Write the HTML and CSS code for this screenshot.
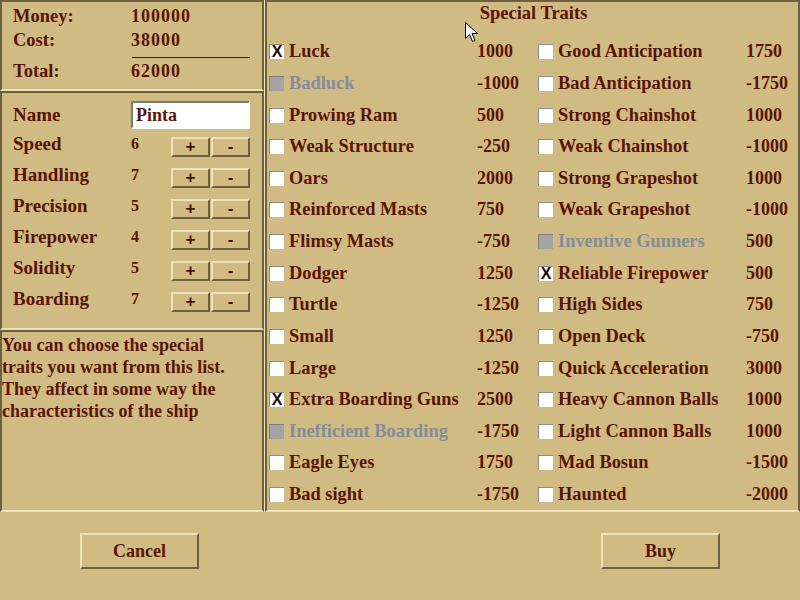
FILE: index.html
```html
<!DOCTYPE html>
<html lang="en">
<head>
    <meta charset="UTF-8">
    <title>Shipyard</title>
    <link rel="stylesheet" href="styles.css">
</head>
<body>
    <div class="screen">
        <div class="main">
            <div class="side">
                <div class="panel money">
                    <div class="money-row"><span>Money:</span><span class="num">100000</span></div>
                    <div class="money-row"><span>Cost:</span><span class="num">38000</span></div>
                    <div class="money-line"></div>
                    <div class="money-row"><span>Total:</span><span class="num">62000</span></div>
                </div>
                <div class="panel stats">
                    <div class="stat name-row"><span>Name</span><input class="name-input" type="text" value="Pinta"></div>
                    <div class="stat"><span>Speed</span><span class="val">6</span><div class="pm"><button>+</button><button>-</button></div></div>
                    <div class="stat"><span>Handling</span><span class="val">7</span><div class="pm"><button>+</button><button>-</button></div></div>
                    <div class="stat"><span>Precision</span><span class="val">5</span><div class="pm"><button>+</button><button>-</button></div></div>
                    <div class="stat"><span>Firepower</span><span class="val">4</span><div class="pm"><button>+</button><button>-</button></div></div>
                    <div class="stat"><span>Solidity</span><span class="val">5</span><div class="pm"><button>+</button><button>-</button></div></div>
                    <div class="stat"><span>Boarding</span><span class="val">7</span><div class="pm"><button>+</button><button>-</button></div></div>
                </div>
                <div class="panel help">
                    <p class="help-text">You can choose the special traits you want from this list. They affect in some way the characteristics of the ship</p>
                </div>
            </div>
            <div class="panel traits">
                <div class="traits-title">Special Traits</div>
                <div class="trait-grid">
                    <div class="trait"><span class="cb checked">X</span><span>Luck</span><span>1000</span></div>
                    <div class="trait"><span class="cb"></span><span>Good Anticipation</span><span>1750</span></div>
                    <div class="trait off"><span class="cb"></span><span>Badluck</span><span>-1000</span></div>
                    <div class="trait"><span class="cb"></span><span>Bad Anticipation</span><span>-1750</span></div>
                    <div class="trait"><span class="cb"></span><span>Prowing Ram</span><span>500</span></div>
                    <div class="trait"><span class="cb"></span><span>Strong Chainshot</span><span>1000</span></div>
                    <div class="trait"><span class="cb"></span><span>Weak Structure</span><span>-250</span></div>
                    <div class="trait"><span class="cb"></span><span>Weak Chainshot</span><span>-1000</span></div>
                    <div class="trait"><span class="cb"></span><span>Oars</span><span>2000</span></div>
                    <div class="trait"><span class="cb"></span><span>Strong Grapeshot</span><span>1000</span></div>
                    <div class="trait"><span class="cb"></span><span>Reinforced Masts</span><span>750</span></div>
                    <div class="trait"><span class="cb"></span><span>Weak Grapeshot</span><span>-1000</span></div>
                    <div class="trait"><span class="cb"></span><span>Flimsy Masts</span><span>-750</span></div>
                    <div class="trait off"><span class="cb"></span><span>Inventive Gunners</span><span>500</span></div>
                    <div class="trait"><span class="cb"></span><span>Dodger</span><span>1250</span></div>
                    <div class="trait"><span class="cb checked">X</span><span>Reliable Firepower</span><span>500</span></div>
                    <div class="trait"><span class="cb"></span><span>Turtle</span><span>-1250</span></div>
                    <div class="trait"><span class="cb"></span><span>High Sides</span><span>750</span></div>
                    <div class="trait"><span class="cb"></span><span>Small</span><span>1250</span></div>
                    <div class="trait"><span class="cb"></span><span>Open Deck</span><span>-750</span></div>
                    <div class="trait"><span class="cb"></span><span>Large</span><span>-1250</span></div>
                    <div class="trait"><span class="cb"></span><span>Quick Acceleration</span><span>3000</span></div>
                    <div class="trait"><span class="cb checked">X</span><span>Extra Boarding Guns</span><span>2500</span></div>
                    <div class="trait"><span class="cb"></span><span>Heavy Cannon Balls</span><span>1000</span></div>
                    <div class="trait off"><span class="cb"></span><span>Inefficient Boarding</span><span>-1750</span></div>
                    <div class="trait"><span class="cb"></span><span>Light Cannon Balls</span><span>1000</span></div>
                    <div class="trait"><span class="cb"></span><span>Eagle Eyes</span><span>1750</span></div>
                    <div class="trait"><span class="cb"></span><span>Mad Bosun</span><span>-1500</span></div>
                    <div class="trait"><span class="cb"></span><span>Bad sight</span><span>-1750</span></div>
                    <div class="trait"><span class="cb"></span><span>Haunted</span><span>-2000</span></div>
                </div>
            </div>
        </div>
        <div class="footer">
            <button class="big-btn">Cancel</button>
            <button class="big-btn">Buy</button>
        </div>

        <!-- mouse pointer -->
        <svg class="cursor" width="14" height="22" viewBox="0 0 14 22">
            <path d="M0.5 0.5 L0.5 16.5 L4.5 12.5 L7.5 19.5 L10 18.5 L7 11.5 L12.5 11.5 Z" fill="#fff" stroke="#000" stroke-width="1"/>
        </svg>
    </div>
</body>
</html>
```

FILE: styles.css
```css
body {
    margin: 0;
    background: #d0bb82;
    font-family: 'Liberation Serif', serif;
    font-weight: bold;
    color: #5a1408;
}
.screen {
    position: relative;
    width: 800px;
    height: 600px;
    overflow: hidden;
}
.main {
    display: grid;
    grid-template-columns: 264px 1fr;
    column-gap: 1px;
    height: 510px;
}
.panel {
    background: #d0bb82;
    border-top: 2px solid #6e5f3e;
    border-left: 2px solid #6e5f3e;
    border-right: 2px solid #6e5f3e;
    border-bottom: 2px solid #f0e2b8;
    box-sizing: border-box;
}
.side {
    display: flex;
    flex-direction: column;
}

/* money box */
.money {
    height: 91px;
    padding: 2px 10px 0 11px;
    font-size: 18.5px;
}
.money-row {
    display: grid;
    grid-template-columns: 118px 1fr;
    height: 24px;
    line-height: 24px;
}
.money .num {
    font-size: 18px;
    letter-spacing: 1px;
}
.money-line {
    margin: 5px 0 1px 119px;
    width: 118px;
    border-top: 1px solid #3c1408;
}

/* stats box */
.stats {
    height: 239px;
    padding: 8px 10px 0 11px;
    font-size: 19px;
}
.stat {
    display: grid;
    grid-template-columns: 118px 40px 80px;
    height: 31px;
    align-items: start;
    line-height: 22px;
}
.name-row {
    grid-template-columns: 118px 119px;
    height: 32px;
}
.name-row span {
    padding-top: 3px;
}
.name-input {
    width: 119px;
    height: 28px;
    box-sizing: border-box;
    border: 2px solid #fff;
    border-top-color: #7a7a7a;
    border-left-color: #7a7a7a;
    background: #fff;
    font: bold 18px 'Liberation Serif', serif;
    color: #5a1408;
    padding: 0 3px;
    outline: none;
}
.val {
    font-size: 16px;
}
.pm {
    display: flex;
    gap: 1px;
    margin-top: 4px;
}
.pm button {
    width: 39px;
    height: 20px;
    padding: 0;
    background: #d0bb82;
    border: 2px solid #6e5f3e;
    border-top-color: #f0e2b8;
    border-left-color: #f0e2b8;
    font: bold 17px 'Liberation Sans', sans-serif;
    line-height: 14px;
    color: #4a0e04;
}

/* help box */
.help {
    flex: 1;
}
.help-text {
    margin: 0;
    padding-top: 2px;
    width: 238px;
    font-size: 18px;
    line-height: 22px;
}

/* traits list */
.traits {
    box-shadow: -1px 0 0 #f0e2b8;
    padding: 0 0 0 2px;
}
.traits-title {
    text-align: center;
    font-size: 18.5px;
    line-height: 20px;
    margin-top: 1px;
}
.trait-grid {
    display: grid;
    grid-template-columns: 269px 1fr;
    grid-auto-rows: 31.64px;
    margin-top: 13px;
    font-size: 18.4px;
}
.trait {
    display: grid;
    grid-template-columns: 20px 188px 1fr;
    align-items: center;
}
.trait span:last-child {
    font-size: 18px;
}
.cb {
    width: 15px;
    height: 15px;
    box-sizing: border-box;
    background: #fff;
    border-top: 1px solid #8c8c8c;
    border-left: 1px solid #8c8c8c;
    font: bold 16px 'Liberation Sans', sans-serif;
    line-height: 14px;
    text-align: center;
    color: #1a0a04;
}
.off {
    color: #868c9a;
}
.off .cb {
    background: #a4a4a4;
    border-color: #7e7e7e;
}
.off span:last-child {
    color: #5a1408;
}

/* bottom buttons */
.footer {
    display: flex;
    justify-content: space-between;
    padding: 23px 80px 0 80px;
}
.big-btn {
    width: 119px;
    height: 36px;
    background: #d0bb82;
    border: 2px solid #6e5f3e;
    border-top-color: #f0e2b8;
    border-left-color: #f0e2b8;
    font: bold 18px 'Liberation Serif', serif;
    color: #5a1408;
}

.cursor {
    position: absolute;
    left: 465px;
    top: 22px;
}
```
